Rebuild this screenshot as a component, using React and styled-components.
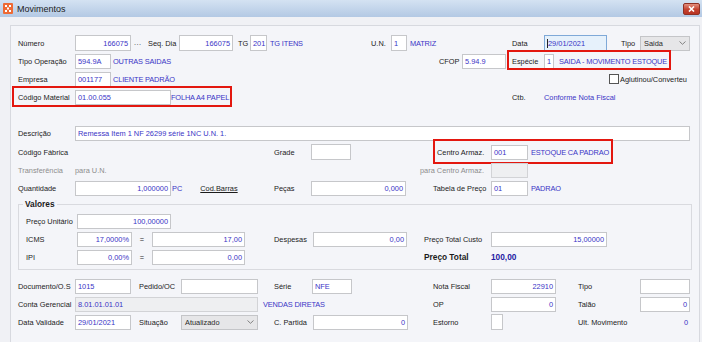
import React from 'react'
import styled, { createGlobalStyle } from 'styled-components'

const GlobalStyle = createGlobalStyle`
  html, body { margin: 0; padding: 0; background: #f0f1f5; }
  body {
    font-family: "Liberation Sans", Arial, sans-serif;
    font-size: 7.4px;
    color: #1b1b1b;
  }
`

const BLUE = '#3a34c6'

const Window = styled.div`
  width: 702px;
  height: 342px;
  overflow: hidden;
  display: flex;
  flex-direction: column;
  background: #f0f1f5;
`

const TitleBar = styled.div`
  height: 17px;
  flex-shrink: 0;
  display: flex;
  align-items: center;
  padding-left: 3px;
  background: linear-gradient(#d4e2f2, #b3c9e4);
`

const Title = styled.span`
  margin-left: 4px;
  font-size: 9px;
  color: #1c1c1c;
`

const CloseBtn = styled.div`
  margin-left: auto;
  margin-right: 2px;
  width: 17px;
  height: 12px;
  box-sizing: border-box;
  border: 1px solid #8e3024;
  border-radius: 2px;
  background: linear-gradient(#e3907f, #c4412f 55%, #b83322);
  display: flex;
  align-items: center;
  justify-content: center;
`

const Body = styled.div`
  flex: 1;
  display: flex;
  padding: 8px 2px 0 10px;
`

const Panel = styled.div`
  flex: 1;
  border: 1px solid #d7d9df;
  border-bottom: none;
  background: #f4f5f9;
  padding: 8px 0 0 7px;
`

const Row = styled.div`
  display: flex;
  align-items: center;
  height: ${p => p.$h || 18}px;
  margin-top: ${p => p.$mt || 0}px;
`

const Field = styled.div`
  position: relative;
  display: flex;
  align-items: center;
  flex-shrink: 0;
  height: 100%;
  ${p => p.$w ? `width: ${p.$w}px;` : ''}
  margin-left: ${p => p.$ml || 0}px;
`

const Marked = styled(Field)`
  &::after {
    content: '';
    position: absolute;
    top: ${p => p.$in[0]}px;
    right: ${p => p.$in[1]}px;
    bottom: ${p => p.$in[2]}px;
    left: ${p => p.$in[3]}px;
    border: 2px solid #e3170f;
    pointer-events: none;
  }
`

const Lbl = styled.span`
  flex-shrink: 0;
  width: ${p => p.$w ? `${p.$w}px` : 'auto'};
  white-space: nowrap;
  color: ${p => p.$muted ? '#8d8d8d' : '#1b1b1b'};
  font-weight: ${p => p.$bold ? 'bold' : 'normal'};
  font-size: ${p => p.$bold ? '8.3px' : 'inherit'};
`

const Box = styled.div`
  flex-shrink: 0;
  width: ${p => p.$w}px;
  height: ${p => p.$h || 15}px;
  box-sizing: border-box;
  border: 1px solid ${p => p.$focus ? '#7fa9d8' : p.$disabled ? '#d2d3d6' : '#c6c7ca'};
  background: ${p => p.$focus ? '#e6f1fb' : p.$disabled ? '#eeeff1' : '#ffffff'};
  color: ${BLUE};
  display: flex;
  align-items: center;
  justify-content: ${p => p.$right ? 'flex-end' : 'flex-start'};
  padding: 0 2px;
  white-space: nowrap;
  overflow: hidden;
`

const Caret = styled.span`
  width: 1px;
  height: 9px;
  background: #222;
`

const Select = styled.div`
  flex-shrink: 0;
  width: ${p => p.$w}px;
  height: 15px;
  box-sizing: border-box;
  border: 1px solid #c4c5c8;
  background: #e6e6e8;
  color: #2a2a2a;
  display: flex;
  align-items: center;
  justify-content: space-between;
  padding: 0 3px;
`

const Val = styled.span`
  flex-shrink: 0;
  white-space: nowrap;
  color: ${p => p.$muted ? '#8d8d8d' : BLUE};
  margin-left: ${p => p.$ml || 0}px;
  letter-spacing: ${p => p.$caps ? '-0.15px' : 'normal'};
  ${p => p.$w ? `width: ${p.$w}px; text-align: right; box-sizing: border-box; padding-right: 2px;` : ''}
`

const Total = styled.span`
  color: #1f1aa3;
  font-weight: bold;
  font-size: 8.3px;
`

const Dots = styled.span`
  align-self: flex-end;
  margin: 0 0 5px 3px;
  letter-spacing: 0.5px;
  color: #333;
`

const LinkText = styled.span`
  margin-left: ${p => p.$ml || 0}px;
  text-decoration: underline;
  color: #1b1b1b;
`

const Eq = styled.span`
  width: 20px;
  text-align: center;
  flex-shrink: 0;
`

const Check = styled.span`
  width: 10px;
  height: 10px;
  box-sizing: border-box;
  border: 1px solid #555;
  background: #fff;
  flex-shrink: 0;
  margin-right: 1px;
`

const Group = styled.div`
  position: relative;
  width: 674px;
  box-sizing: border-box;
  margin-top: 7px;
  border: 1px solid #d9dadf;
  padding: 7px 0 3px 7px;
`

const Legend = styled.span`
  position: absolute;
  top: -6px;
  left: 4px;
  padding: 0 2px;
  background: #f4f5f9;
  font-weight: bold;
  font-size: 8.3px;
`

const AppIcon = () => (
  <svg width="10" height="11" viewBox="0 0 10 11">
    <rect x="0" y="0" width="10" height="11" rx="1" fill="#ee6a34" />
    <path d="M2 2h2v2H2zM6 2h2v2H6zM4 4.5h2v2H4zM2 7h2v2H2zM6 7h2v2H6z" fill="#fff" />
  </svg>
)

const Chevron = () => (
  <svg width="7" height="4" viewBox="0 0 7 4">
    <path d="M0.5 0.5L3.5 3.3L6.5 0.5" fill="none" stroke="#777" strokeWidth="0.9" />
  </svg>
)

export default function App() {
  return (
    <Window>
      <GlobalStyle />
      <TitleBar>
        <AppIcon />
        <Title>Movimentos</Title>
        <CloseBtn>
          <svg width="7" height="6" viewBox="0 0 7 6">
            <path d="M1 0.5L6 5.5M6 0.5L1 5.5" stroke="#fff" strokeWidth="1.6" />
          </svg>
        </CloseBtn>
      </TitleBar>
      <Body>
        <Panel>
          <Row>
            <Field $w={130}>
              <Lbl $w={57}>Número</Lbl>
              <Box $w={56} $h={16} $right>166075</Box>
              <Dots>...</Dots>
            </Field>
            <Field $w={90}>
              <Lbl $w={31}>Seq. Dia</Lbl>
              <Box $w={54} $h={16} $right>166075</Box>
            </Field>
            <Field $w={133}>
              <Lbl $w={12}>TG</Lbl>
              <Box $w={17} $h={16}>201</Box>
              <Val $ml={3} $caps>TG ITENS</Val>
            </Field>
            <Field $w={141}>
              <Lbl $w={20}>U.N.</Lbl>
              <Box $w={16} $h={16}>1</Box>
              <Val $ml={3} $caps>MATRIZ</Val>
            </Field>
            <Field $w={109}>
              <Lbl $w={32}>Data</Lbl>
              <Box $w={63} $h={16} $focus><Caret />29/01/2021</Box>
            </Field>
            <Field>
              <Lbl $w={19}>Tipo</Lbl>
              <Select $w={50}>Saida<Chevron /></Select>
            </Field>
          </Row>

          <Row>
            <Field $w={421}>
              <Lbl $w={57}>Tipo Operação</Lbl>
              <Box $w={36}>594.9A</Box>
              <Val $ml={2} $caps>OUTRAS SAIDAS</Val>
            </Field>
            <Field $w={73}>
              <Lbl $w={23}>CFOP</Lbl>
              <Box $w={44}>5.94.9</Box>
            </Field>
            <Marked $w={155} $in={[-2, -4, 0, -5]}>
              <Lbl $w={32}>Espécie</Lbl>
              <Box $w={10}>1</Box>
              <Val $ml={5} $caps>SAIDA - MOVIMENTO ESTOQUE</Val>
            </Marked>
          </Row>

          <Row>
            <Field $w={591}>
              <Lbl $w={57}>Empresa</Lbl>
              <Box $w={36}>001177</Box>
              <Val $ml={2} $caps>CLIENTE PADRÃO</Val>
            </Field>
            <Field>
              <Check />
              <Lbl>Aglutinou/Converteu</Lbl>
            </Field>
          </Row>

          <Row>
            <Marked $w={214} $in={[-2, 0, -1, -6]}>
              <Lbl $w={57}>Código Material</Lbl>
              <Box $w={96}>01.00.055</Box>
              <Val $caps>FOLHA A4 PAPEL</Val>
            </Marked>
            <Field $ml={280}>
              <Lbl $w={32}>Ctb.</Lbl>
              <Val>Conforme Nota Fiscal</Val>
            </Field>
          </Row>

          <Row $mt={18} $h={19}>
            <Lbl $w={57}>Descrição</Lbl>
            <Box $w={615}>Remessa Item 1 NF 26299 série 1NC U.N. 1.</Box>
          </Row>

          <Row>
            <Field $w={256}>
              <Lbl>Código Fábrica</Lbl>
            </Field>
            <Field $w={163}>
              <Lbl $w={37}>Grade</Lbl>
              <Box $w={40} $h={16} />
            </Field>
            <Marked $w={176} $in={[-4, 0, -3, -4]}>
              <Lbl $w={54}>Centro Armaz.</Lbl>
              <Box $w={37}>001</Box>
              <Val $ml={3} $caps>ESTOQUE CA PADRAO</Val>
            </Marked>
          </Row>

          <Row>
            <Field $w={402}>
              <Lbl $w={57} $muted>Transferência</Lbl>
              <Val $muted>para U.N.</Val>
            </Field>
            <Field>
              <Lbl $w={71} $muted>para Centro Armaz.</Lbl>
              <Box $w={37} $disabled />
            </Field>
          </Row>

          <Row>
            <Field $w={256}>
              <Lbl $w={57}>Quantidade</Lbl>
              <Box $w={96} $right>1,000000</Box>
              <Val $ml={1}>PC</Val>
              <LinkText $ml={18}>Cod.Barras</LinkText>
            </Field>
            <Field $w={159}>
              <Lbl $w={37}>Peças</Lbl>
              <Box $w={95} $right>0,000</Box>
            </Field>
            <Field>
              <Lbl $w={58}>Tabela de Preço</Lbl>
              <Box $w={37}>01</Box>
              <Val $ml={3} $caps>PADRAO</Val>
            </Field>
          </Row>

          <Group>
            <Legend>Valores</Legend>
            <Row>
              <Lbl $w={51}>Preço Unitário</Lbl>
              <Box $w={94} $right>100,00000</Box>
            </Row>
            <Row>
              <Field $w={248}>
                <Lbl $w={51}>ICMS</Lbl>
                <Box $w={55} $right>17,0000%</Box>
                <Eq>=</Eq>
                <Box $w={93} $right>17,00</Box>
              </Field>
              <Field $w={150}>
                <Lbl $w={39}>Despesas</Lbl>
                <Box $w={94} $right>0,00</Box>
              </Field>
              <Field>
                <Lbl $w={67}>Preço Total Custo</Lbl>
                <Box $w={116} $right>15,00000</Box>
              </Field>
            </Row>
            <Row>
              <Field $w={398}>
                <Lbl $w={51}>IPI</Lbl>
                <Box $w={55} $right>0,00%</Box>
                <Eq>=</Eq>
                <Box $w={93} $right>0,00</Box>
              </Field>
              <Field>
                <Lbl $w={67} $bold>Preço Total</Lbl>
                <Total>100,00</Total>
              </Field>
            </Row>
          </Group>

          <Row $mt={7}>
            <Field $w={121}>
              <Lbl $w={57}>Documento/O.S</Lbl>
              <Box $w={56}>1015</Box>
            </Field>
            <Field $w={135}>
              <Lbl $w={42}>Pedido/OC</Lbl>
              <Box $w={77} />
            </Field>
            <Field $w={159}>
              <Lbl $w={38}>Série</Lbl>
              <Box $w={40}>NFE</Box>
            </Field>
            <Field $w={145}>
              <Lbl $w={58}>Nota Fiscal</Lbl>
              <Box $w={65} $right>22910</Box>
            </Field>
            <Field>
              <Lbl $w={62}>Tipo</Lbl>
              <Box $w={50} />
            </Field>
          </Row>

          <Row>
            <Field $w={415}>
              <Lbl $w={57}>Conta Gerencial</Lbl>
              <Box $w={183} $disabled>8.01.01.01.01</Box>
              <Val $ml={5} $caps>VENDAS DIRETAS</Val>
            </Field>
            <Field $w={145}>
              <Lbl $w={58}>OP</Lbl>
              <Box $w={65} $right>0</Box>
            </Field>
            <Field>
              <Lbl $w={62}>Talão</Lbl>
              <Box $w={50} $right>0</Box>
            </Field>
          </Row>

          <Row>
            <Field $w={121}>
              <Lbl $w={57}>Data Validade</Lbl>
              <Box $w={56}>29/01/2021</Box>
            </Field>
            <Field $w={135}>
              <Lbl $w={42}>Situação</Lbl>
              <Select $w={77}>Atualizado<Chevron /></Select>
            </Field>
            <Field $w={159}>
              <Lbl $w={39}>C. Partida</Lbl>
              <Box $w={95} $right>0</Box>
            </Field>
            <Field $w={145}>
              <Lbl $w={58}>Estorno</Lbl>
              <Box $w={12} $h={16} />
            </Field>
            <Field>
              <Lbl $w={62}>Ult. Movimento</Lbl>
              <Val $w={50}>0</Val>
            </Field>
          </Row>
        </Panel>
      </Body>
    </Window>
  )
}
